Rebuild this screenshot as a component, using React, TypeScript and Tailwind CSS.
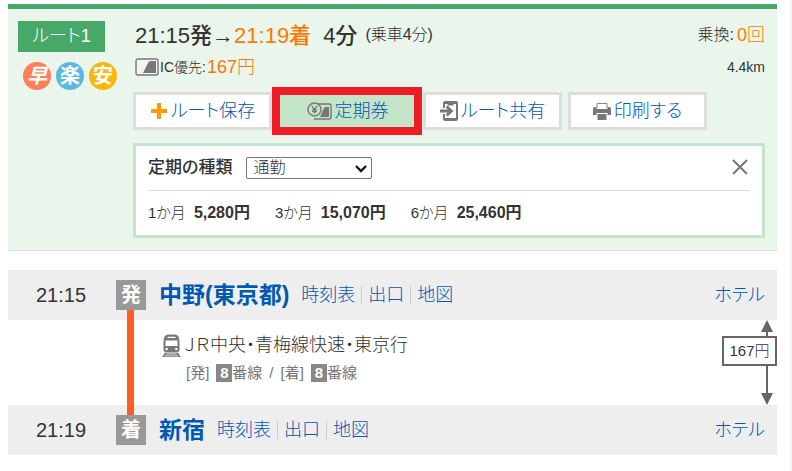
import React, { useState } from 'react'

interface StationProps {
    time: string;
    mark: string;
    name: string;
}

const passPrices = [
    { term: '1か月', price: '5,280円' },
    { term: '3か月', price: '15,070円' },
    { term: '6か月', price: '25,460円' },
];

const stationLinks = ['時刻表', '出口', '地図'];

const PlusIcon = () => (
    <svg className="h-[18px] w-[18px]" viewBox="0 0 18 18" fill="#ff9900">
        <path d="M7 1h4v6h6v4h-6v6H7v-6H1V7h6z" />
    </svg>
);

const IcCardIcon = () => (
    <svg className="h-[18px] w-6" viewBox="0 0 24 18">
        <rect x="1" y="1" width="22" height="16" rx="2" fill="#f4f4f4" stroke="#777" strokeWidth="1.4" />
        <path d="M8 15L13 5Q14 3 16 3H21V15Z" fill="#777" />
    </svg>
);

const PassIcon = () => (
    <svg className="h-[18px] w-[25px]" viewBox="0 0 25 18" fill="none" stroke="#777">
        <path d="M11 2h11a2 2 0 0 1 2 2v11a2 2 0 0 1-2 2H7" strokeWidth="1.4" />
        <path d="M13 15l4-9q1-1 2-1h3v10z" fill="#777" stroke="none" />
        <circle cx="7.5" cy="7.5" r="6.5" fill="#c5e5c9" strokeWidth="1.4" />
        <path d="M4.8 3.8L7.5 7.5l2.7-3.7M7.5 7.5v4M5 7.8h5M5 9.6h5" strokeWidth="1.2" />
    </svg>
);

const ShareIcon = () => (
    <svg className="h-5 w-[18px]" viewBox="0 0 18 20">
        <path d="M5 0h11q2 0 2 2v16q0 2-2 2H5q-2 0-2-2V2q0-2 2-2z" fill="#777" />
        <path d="M5 3h2.5v1.5h6V3H16v14H5z" fill="#fff" />
        <path d="M2.500 7H6v6H2.500z" fill="#fff" />
        <path d="M0 8.500h7.500L5.800 6.500 7.500 4.500 13.500 10l-6 5.500-1.700-2 1.700-2H0z" fill="#777" />
    </svg>
);

const PrinterIcon = () => (
    <svg className="h-[18px] w-[18px]" viewBox="0 0 18 18">
        <path d="M4 6V1.5h10V6" fill="#fff" stroke="#888" />
        <path d="M2 5h1.500v2h11V5H16q2 0 2 2v6h-3.500v-2h-11v2H0V7q0-2 2-2z" fill="#777" />
        <path d="M4.500 12h9v6h-9z" fill="#777" />
    </svg>
);

const TrainIcon = () => (
    <svg className="h-[23px] w-[19px]" viewBox="0 0 19 23">
        <path d="M6 .5h7q3.500.5 4 3.500l.5 3v9q0 2-2 2h-12q-2 0-2-2V7L2 4Q2.500 1 6 .5z" fill="#777" />
        <path d="M5.500 2.800h8V4h-8zM3.500 6.500h12V12h-12z" fill="#fff" />
        <circle cx="4.7" cy="15" r="1.2" fill="#fff" />
        <circle cx="14.3" cy="15" r="1.2" fill="#fff" />
        <path d="M3 18.500h13l2.800 4.500H.2zM4.500 19.500l-.5.8h11l-.5-.8zM3 21.500l-.4.8h13.800l-.4-.8z" fill="#777" fillRule="evenodd" />
    </svg>
);

const StationRow: React.FC<StationProps> = ({ time, mark, name }) => {
    return (
        <div className="flex h-[50px] items-center bg-[#eee] pr-3">
            <div className="w-[108px] pl-7 text-[20px]">{time}</div>
            <div className="flex h-[30px] w-[30px] items-center justify-center bg-[#999] text-[20px] font-bold text-white">{mark}</div>
            <a href="#" className="ml-[13px] text-[23px] font-bold text-[#0058b1]">{name}</a>
            <div className="ml-[6px] flex divide-x divide-[#ccc] text-[18px] leading-[18px] text-[#0058b1]">
                {stationLinks.map((link) => (
                    <a key={link} href="#" className="px-[6px]">{link}</a>
                ))}
            </div>
            <a href="#" className="ml-auto text-[18px] text-[#0058b1]">ホテル</a>
        </div>
    );
}

const App = () => {
    const [passType, setPassType] = useState('通勤');
    const [showPass, setShowPass] = useState(true);

    const toolButton = 'flex h-[38px] w-[139px] items-center justify-center gap-[3px] border-[3px] border-[#ddd] bg-white text-[18px] text-[#0058b1]';

    return (
        <div className="min-h-screen border-r-2 border-[#f5f5f5] bg-white pt-1 pr-[13px] pl-2 font-['Liberation_Sans','Noto_Sans_CJK_JP',sans-serif] font-light text-[#333] [font-feature-settings:'palt']">
            <section className="flex border-t-[5px] border-b border-t-[#48a868] border-b-[#ddd] bg-[#eaf5eb] pr-3 pb-3 pl-[10px]">
                <div className="w-[115px] shrink-0 pt-3">
                    <h2 className="flex h-[31px] w-[87px] items-center justify-center bg-[#48a868] text-[18px] font-light text-white">ルート1</h2>
                    <div className="mt-[10px] ml-[5px] flex gap-[5px] text-[20px] font-bold text-white">
                        <span className="flex h-7 w-7 items-center justify-center rounded-full bg-[#ff7f57] italic">早</span>
                        <span className="flex h-7 w-7 items-center justify-center rounded-full bg-[#5bb9dc]">楽</span>
                        <span className="flex h-7 w-7 items-center justify-center rounded-full bg-[#fab60a]">安</span>
                    </div>
                </div>

                <div className="min-w-0 flex-1 pt-3">
                    <div className="flex h-7 items-center justify-between">
                        <div className="flex items-center pl-[2px] text-[22px] font-medium">
                            <span>21:15発→</span>
                            <span className="text-[#ff7800]">21:19着</span>
                            <span className="ml-3">4分</span>
                            <span className="ml-2 text-[16px] font-light">(乗車4分)</span>
                        </div>
                        <div className="flex items-center gap-[3px] text-[16px]">
                            乗換:<span className="text-[18px] text-[#ff7800]">0回</span>
                        </div>
                    </div>
                    <div className="mt-1 flex h-7 items-center justify-between text-[14px]">
                        <div className="flex items-center gap-[1px] pl-[2px]">
                            <IcCardIcon />
                            IC優先:<span className="text-[18px] text-[#ff7800]">167円</span>
                        </div>
                        <span>4.4km</span>
                    </div>

                    <div className="mt-[11px] flex gap-[6px]">
                        <button type="button" className={toolButton}><PlusIcon />ルート保存</button>
                        <div className="relative">
                            <button
                                type="button"
                                onClick={() => setShowPass(!showPass)}
                                className="flex h-[38px] w-[139px] items-center justify-center gap-[3px] bg-[#c5e5c9] text-[18px] text-[#0058b1]"
                            >
                                <PassIcon />定期券
                            </button>
                            <div className="pointer-events-none absolute -top-[5px] -right-[5px] -bottom-[5px] -left-[6px] z-10 border-8 border-[#ee1c24]"></div>
                        </div>
                        <button type="button" className={toolButton}><ShareIcon />ルート共有</button>
                        <button type="button" className={toolButton}><PrinterIcon />印刷する</button>
                    </div>

                    {showPass && (
                        <div className="mt-[13px] border-[3px] border-[#c6e4c9] bg-white px-3 pt-[11px] pb-3">
                            <div className="flex h-[34px] items-start justify-between border-b border-[#ddd]">
                                <div className="flex items-center">
                                    <label htmlFor="pass-type" className="text-[17px] leading-[22px] font-medium">定期の種類</label>
                                    <div className="relative ml-[14px]">
                                        <select
                                            id="pass-type"
                                            value={passType}
                                            onChange={(e) => setPassType(e.target.value)}
                                            className="block h-[22px] w-[126px] appearance-none rounded-[2px] border border-[#767676] bg-white pl-[6px] text-[16px] leading-5"
                                        >
                                            <option>通勤</option>
                                            <option>通学</option>
                                        </select>
                                        <svg className="pointer-events-none absolute top-2 right-[5px] h-2 w-3" viewBox="0 0 12 8" fill="none" stroke="#111" strokeWidth="2.4">
                                            <path d="M1 1l5 5 5-5" />
                                        </svg>
                                    </div>
                                </div>
                                <button type="button" aria-label="閉じる" onClick={() => setShowPass(false)} className="p-[2px]">
                                    <svg className="h-4 w-4" viewBox="0 0 16 16" stroke="#777" strokeWidth="2">
                                        <path d="M1 1l14 14M15 1L1 15" />
                                    </svg>
                                </button>
                            </div>
                            <dl className="mt-3 flex h-5 items-center gap-[25px]">
                                {passPrices.map((item) => (
                                    <div key={item.term} className="flex items-center gap-2">
                                        <dt className="text-[15px]">{item.term}</dt>
                                        <dd className="text-[16px] font-bold">{item.price}</dd>
                                    </div>
                                ))}
                            </dl>
                        </div>
                    )}
                </div>
            </section>

            <section className="mt-[19px]">
                <StationRow time="21:15" mark="発" name="中野(東京都)" />
                <div className="flex h-[85px]">
                    <div className="relative z-10 -my-[10px] ml-[119px] w-[7px] bg-[#ff5c26]"></div>
                    <div className="ml-7 pt-3">
                        <div className="flex h-[26px] items-center gap-[3px] text-[18px]">
                            <TrainIcon />ＪＲ中央・青梅線快速・東京行
                        </div>
                        <div className="mt-[5px] flex h-5 items-center pl-6 text-[15px] font-normal text-[#777]">
                            [発]
                            <span className="ml-[7px] h-[18px] w-4 bg-[#888] text-center leading-[18px] font-bold text-white">8</span>
                            番線
                            <span className="mx-[7px]">/</span>
                            [着]
                            <span className="ml-[7px] h-[18px] w-4 bg-[#888] text-center leading-[18px] font-bold text-white">8</span>
                            番線
                        </div>
                    </div>
                    <div className="relative ml-auto flex w-[55px] flex-col pt-4">
                        <div className="absolute inset-y-0 right-1 flex w-3 flex-col items-center">
                            <svg className="h-3 w-3" viewBox="0 0 12 12" fill="#666"><path d="M6 0l6 12H0z" /></svg>
                            <div className="w-[2px] flex-1 bg-[#666]"></div>
                            <svg className="h-3 w-3" viewBox="0 0 12 12" fill="#666"><path d="M6 12L0 0h12z" /></svg>
                        </div>
                        <div className="relative flex h-[30px] items-center justify-center border-2 border-[#666] bg-white text-[15px]">167円</div>
                    </div>
                </div>
                <StationRow time="21:19" mark="着" name="新宿" />
            </section>
        </div>
    )
}

export default App
